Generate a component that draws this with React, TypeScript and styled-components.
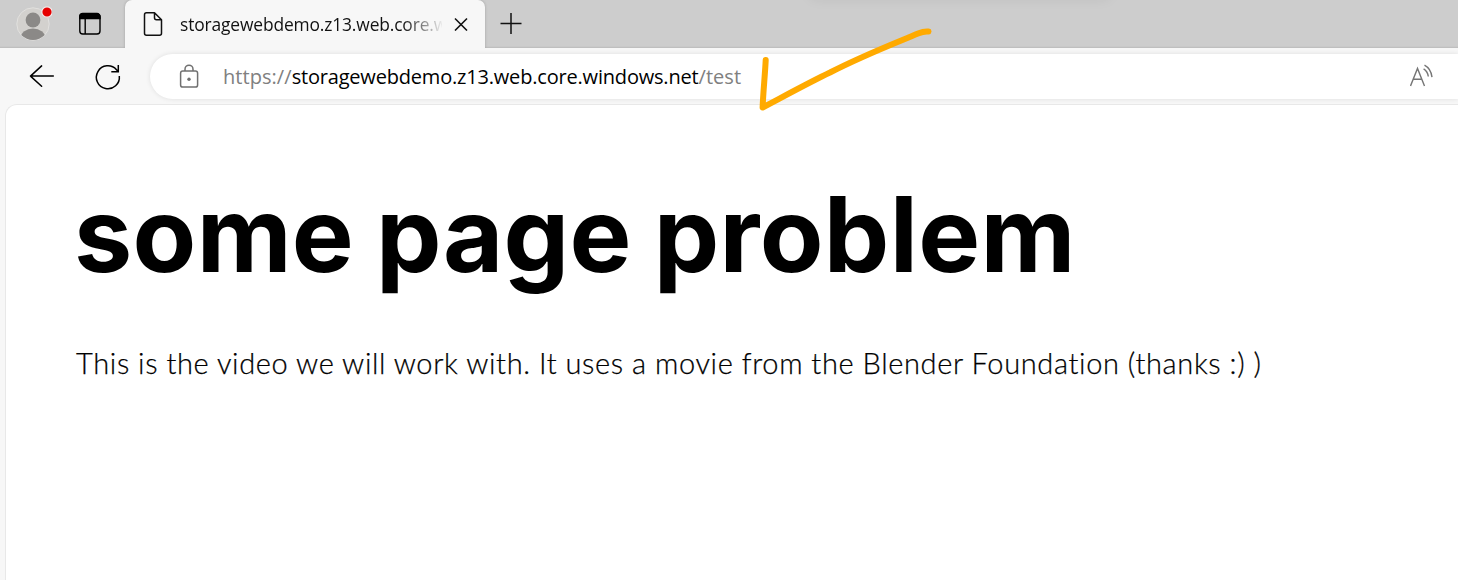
import React from 'react';
import styled, { createGlobalStyle } from 'styled-components';

const GlobalStyle = createGlobalStyle`
  * { box-sizing: border-box; }
  body { margin: 0; background: #f7f7f7; overflow: hidden; }
  h1, p { margin: 0; }
  svg { display: block; flex: none; }
`;

const Browser = styled.div`
  position: relative;
  display: flex;
  flex-direction: column;
  width: 1458px;
  height: 580px;
  overflow: hidden;
  background: #f7f7f7;
  font-family: 'Open Sans', 'Noto Sans', sans-serif;
`;

const TabStrip = styled.header`
  display: flex;
  height: 48px;
  flex: none;
  background: linear-gradient(#cdcdcd 0 46px, #c5c5c5 47px, #b9b9b9 48px);
`;

const StripActions = styled.div`
  display: flex;
  gap: 27px;
  width: 125px;
  padding: 5px 0 0 15px;
`;

const Tab = styled.div`
  display: flex;
  align-items: center;
  width: 360px;
  height: 48px;
  padding-left: 18px;
  background: #f7f7f7;
  border-radius: 7px 7px 0 0;
  box-shadow: 0 0 3px rgba(0, 0, 0, 0.22);
`;

const TabTitle = styled.span`
  width: 262px;
  margin-left: 17px;
  overflow: hidden;
  white-space: nowrap;
  font-size: 17.4px;
  line-height: 24px;
  letter-spacing: -0.14px;
  color: #111;
  mask-image: linear-gradient(90deg, #000 222px, transparent 264px);
`;

const IconButton = styled.button<{ $width: number; $height?: number }>`
  display: flex;
  align-items: center;
  justify-content: center;
  width: ${({ $width }) => $width}px;
  height: ${({ $height = 48 }) => $height}px;
  padding: 0;
  border: 0;
  background: none;
`;

const Toolbar = styled.nav`
  display: flex;
  height: 56px;
  flex: none;
  padding: 6px 0 5px 20px;
  background: #f7f7f7;
`;

const AddressBar = styled.div`
  display: flex;
  align-items: center;
  flex: 1;
  height: 45px;
  padding: 0 24px 0 29px;
  background: #fff;
  border-radius: 23px 0 0 23px;
  box-shadow: 0 0 5px rgba(0, 0, 0, 0.1);
`;

const Url = styled.span`
  flex: 1;
  margin-left: 24px;
  white-space: nowrap;
  font-size: 20px;
  line-height: 28px;
  letter-spacing: 0.05px;
  color: #808080;
`;

const Host = styled.span`
  color: #000;
  letter-spacing: -0.19px;
`;

const Page = styled.main`
  flex: 1;
  margin-left: 5px;
  padding: 59px 0 0 70px;
  background: #fff;
  border: solid #e8e8e8;
  border-width: 1px 0 0 1px;
  border-radius: 12px 0 0 0;
  color: #000;
`;

const Heading = styled.h1`
  margin-left: -2px;
  font-family: Inter, sans-serif;
  font-size: 104px;
  font-weight: 700;
  line-height: 140px;
  letter-spacing: 0.3px;
  word-spacing: -3px;
  white-space: nowrap;
`;

const Paragraph = styled.p`
  margin-top: 39px;
  font-family: Lato, sans-serif;
  font-size: 29px;
  font-weight: 300;
  line-height: 40px;
  letter-spacing: 0.65px;
  word-spacing: -0.3px;
  white-space: nowrap;
  -webkit-text-stroke: 0.25px #000;
`;

const Annotation = styled.svg`
  position: absolute;
  left: 750px;
  top: 20px;
  pointer-events: none;
`;

const WindowShade = styled.div`
  position: absolute;
  left: 815px;
  top: -14px;
  width: 290px;
  height: 8px;
  box-shadow: 0 0 14px 4px rgba(0, 0, 0, 0.08);
`;

const ProfileIcon = () => (
  <svg width="37" height="38" viewBox="15 5 37 38">
    <defs>
      <clipPath id="avatar"><circle cx="33" cy="24" r="16" /></clipPath>
    </defs>
    <circle cx="33" cy="24" r="16.2" fill="#d3d1ce" stroke="#e2e1df" />
    <g fill="#8b8987" clipPath="url(#avatar)">
      <circle cx="33" cy="20" r="7.4" />
      <ellipse cx="33" cy="38" rx="12.3" ry="9.5" />
    </g>
    <circle cx="47" cy="12" r="5.2" fill="#e60000" stroke="#f2eeee" strokeWidth="1.2" />
  </svg>
);

const TabActionsIcon = () => (
  <svg width="22" height="38" viewBox="79 5 22 38" fill="none" stroke="#000" strokeWidth="1.4">
    <rect x="79.8" y="14" width="20.2" height="20" rx="3" />
    <path d="M79.8 18.5V16.5a3 3 0 0 1 3-3h14.2a3 3 0 0 1 3 3v2z" fill="#000" />
    <path d="M85.2 18v16" />
  </svg>
);

const DocumentIcon = () => (
  <svg width="20" height="26" viewBox="143 11 20 26" fill="none" stroke="#111" strokeWidth="1.5" strokeLinejoin="round">
    <path d="M154.5 12.7h-8a2 2 0 0 0-2 2v18.6a2 2 0 0 0 2 2h13a2 2 0 0 0 2-2V19.7zv5a2 2 0 0 0 2 2h5" />
  </svg>
);

const CloseIcon = () => (
  <svg width="14" height="14" viewBox="0 0 14 14" stroke="#111" strokeWidth="1.6">
    <path d="M1 1.500l12 12M13 1.500L1 13.500" />
  </svg>
);

const PlusIcon = () => (
  <svg width="22" height="22" viewBox="0 0 22 22" stroke="#111" strokeWidth="1.5">
    <path d="M.5 10.5h21M11 0v21" />
  </svg>
);

const BackIcon = () => (
  <svg width="26" height="24" viewBox="29 64.500 26 24" fill="none" stroke="#000" strokeWidth="1.5" strokeLinecap="round" strokeLinejoin="round">
    <path d="M53.3 75.6H30.5M41.6 65.4L30.5 75.6l11.1 10.2" />
  </svg>
);

const RefreshIcon = () => (
  <svg width="28" height="28" viewBox="93 62.500 28 28" fill="none" stroke="#000" strokeWidth="1.5">
    <path d="M119.300 75.500a11.500 11.500 0 1 1-2.800-6.300l1.900 2M118.300 64.500v6.700h-7" />
  </svg>
);

const LockIcon = () => (
  <svg width="20" height="26" viewBox="179 63.500 20 26" fill="none" stroke="#707070" strokeWidth="1.5">
    <rect x="180.6" y="70.6" width="17" height="16" rx="2.2" />
    <path d="M185 70.5v-1.8a4 4 0 0 1 8 0v1.8" />
    <circle cx="189" cy="78.7" r="1.7" fill="#707070" stroke="none" />
  </svg>
);

const ReadAloudIcon = () => (
  <svg width="24" height="26" viewBox="1410 63.700 24 26" fill="none" stroke="#757575" strokeWidth="1.4">
    <path d="M1410.5 85.6l7-17.4 7 17.4M1412.8 79h9.4" />
    <path d="M1423.6 68.6q4 2.4 4.7 7.6M1424.5 64.8q6.5 3.5 7.5 12" />
  </svg>
);

export default function App() {
  return (
    <Browser>
      <GlobalStyle />
      <TabStrip>
        <StripActions>
          <ProfileIcon />
          <TabActionsIcon />
        </StripActions>
        <Tab>
          <DocumentIcon />
          <TabTitle>storagewebdemo.z13.web.core.windows.net</TabTitle>
          <IconButton $width={38} aria-label="Close tab"><CloseIcon /></IconButton>
        </Tab>
        <IconButton $width={51} aria-label="New tab"><PlusIcon /></IconButton>
      </TabStrip>
      <Toolbar>
        <IconButton $width={44} $height={45} aria-label="Back"><BackIcon /></IconButton>
        <IconButton $width={86} $height={45} aria-label="Refresh"><RefreshIcon /></IconButton>
        <AddressBar>
          <LockIcon />
          <Url>https://<Host>storagewebdemo.z13.web.core.windows.net</Host>/test</Url>
          <ReadAloudIcon />
        </AddressBar>
      </Toolbar>
      <Page>
        <Heading>some page problem</Heading>
        <Paragraph>This is the video we will work with. It uses a movie from the Blender Foundation (thanks :) )</Paragraph>
      </Page>
      <WindowShade />
      <Annotation width="190" height="96" viewBox="750 20 190 96" fill="none" stroke="#ffaa00" strokeWidth="6" strokeLinecap="round" strokeLinejoin="round">
        <path d="M765.7 60C765 75 763.2 92 762.6 107.5C790 93 812 81 830 72.500C864 55 898 42 918 33.500Q924 31 928.500 31.500" />
      </Annotation>
    </Browser>
  );
}
